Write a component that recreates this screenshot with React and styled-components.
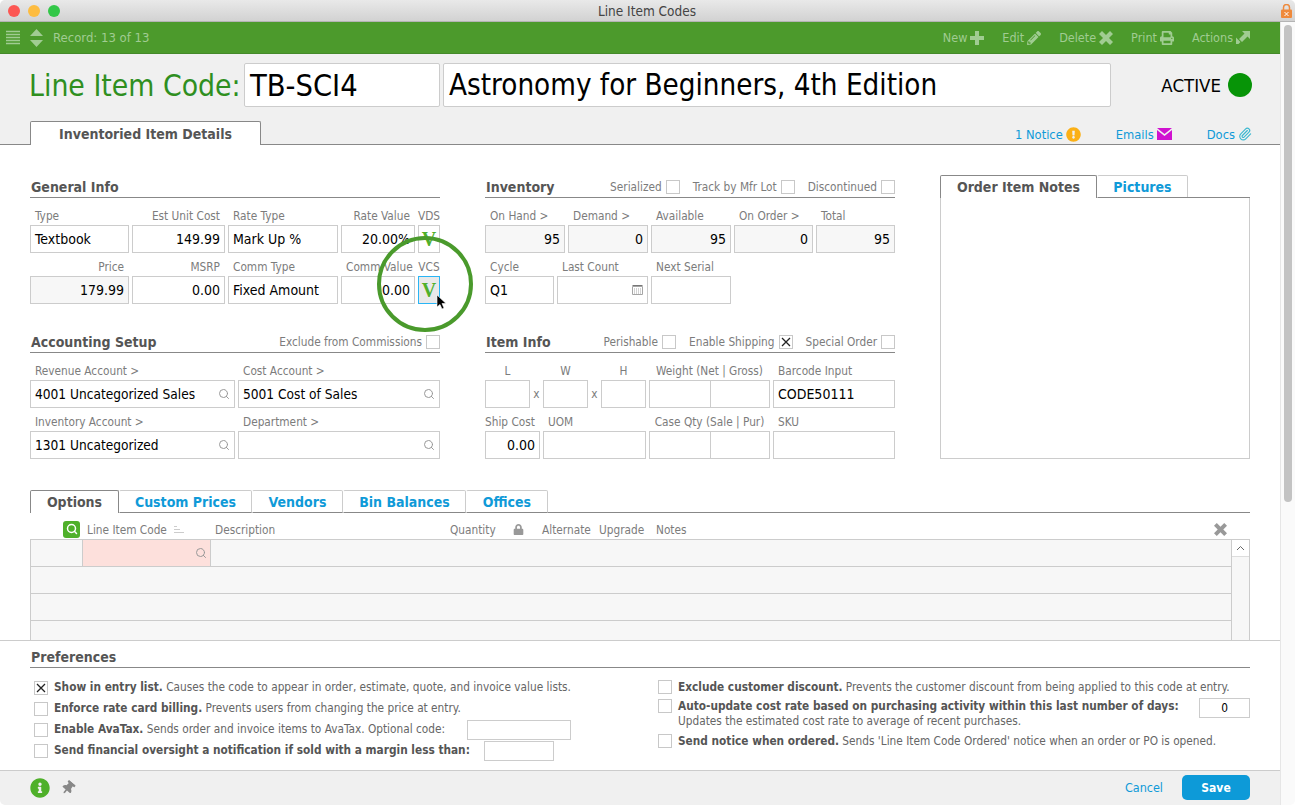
import styled, { createGlobalStyle } from "styled-components";
import { FaPencilAlt, FaPrint, FaExclamationCircle, FaInfoCircle, FaThumbtack, FaLock } from "react-icons/fa";
import { Search, Paperclip } from "lucide-react";

const GlobalStyle = createGlobalStyle`
  html, body { margin: 0; padding: 0; background: #fff; }
  * { box-sizing: border-box; }
  body { font-family: "DejaVu Sans Condensed", "Noto Sans", sans-serif; font-size: 11.75px; color: #7c7c7c; }
`;

const Window = styled.div`
  width: 1295px;
  height: 805px;
  display: flex;
  flex-direction: column;
  overflow: hidden;
  border-radius: 5px;
`;
const TitleBar = styled.div`
  height: 22px;
  flex: none;
  display: grid;
  grid-template-columns: 100px 1fr 106px;
  align-items: center;
  padding: 0 3px 0 8px;
  background: linear-gradient(#e9e9e9, #d2d2d2);
  border-bottom: 1px solid #b4b4b4;
  color: #444;
  font-size: 13.5px;
`;
const Lights = styled.div`
  display: flex;
  gap: 8px;
`;
const Light = styled.span`
  width: 12px;
  height: 12px;
  border-radius: 50%;
  background: ${(p) => p.$color};
`;
const WindowTitle = styled.div`
  text-align: center;
`;
const LockBadge = styled.svg`
  justify-self: end;
`;
const Body = styled.div`
  flex: 1;
  min-height: 0;
  display: flex;
`;
const Main = styled.div`
  width: 1280px;
  display: flex;
  flex-direction: column;
`;
const Track = styled.div`
  width: 15px;
  padding: 3px 3px 0;
  background: #fafafa;
  border-left: 1px solid #e6e6e6;
`;
const Thumb = styled.div`
  height: 477px;
  border-radius: 4px;
  background: #c3c3c3;
`;
const Toolbar = styled.div`
  height: 32px;
  flex: none;
  display: flex;
  align-items: center;
  padding: 0 30px 0 6px;
  background: #4c9a2c;
  border-bottom: 1px solid #44892a;
  color: #a0cc92;
  font-size: 12.5px;
`;
const Stepper = styled.svg`
  margin-left: 10px;
`;
const Record = styled.span`
  margin-left: 10px;
  font-size: 13px;
`;
const ToolActions = styled.div`
  margin-left: auto;
  display: flex;
  gap: 18px;
`;
const ToolAction = styled.span`
  display: flex;
  align-items: center;
  gap: 3px;
  svg { font-size: 14px; }
`;
const Header = styled.div`
  height: 91px;
  flex: none;
  display: flex;
  flex-direction: column;
  padding-top: 9px;
  background: #f0f0f0;
  border-bottom: 1px solid #888;
`;
const TitleRow = styled.div`
  height: 44px;
  display: flex;
  align-items: center;
  padding: 0 28px 0 29px;
`;
const BigLabel = styled.div`
  width: 215px;
  color: #2f8f1f;
  font-size: 29.800px;
  white-space: nowrap;
`;
const BigInput = styled.div`
  width: ${(p) => p.$w}px;
  height: 44px;
  margin-right: 3px;
  padding-left: 5px;
  display: flex;
  align-items: center;
  background: #fff;
  border: 1px solid #ccc;
  border-radius: 2px;
  color: #000;
  font-size: ${(p) => p.$size}px;
  white-space: nowrap;
`;
const Status = styled.div`
  margin-left: auto;
  display: flex;
  align-items: center;
  gap: 7px;
  color: #000;
  font-size: 18.500px;
`;
const Dot = styled.span`
  width: 24px;
  height: 24px;
  border-radius: 50%;
  background: #079407;
`;
const HeaderTabs = styled.div`
  margin-top: auto;
  height: 23px;
  display: flex;
  align-items: flex-end;
  justify-content: space-between;
  padding: 0 28px 0 30px;
`;
const Links = styled.div`
  display: flex;
  align-self: center;
  gap: 35px;
  padding-top: 3px;
  color: #0f9ad8;
`;
const HeadLink = styled.span`
  display: flex;
  align-items: center;
  gap: 3px;
  font-size: 12.800px;
`;
const Tab = styled.div`
  width: ${(p) => p.$w}px;
  height: 23px;
  display: flex;
  align-items: center;
  justify-content: center;
  background: #fff;
  border: 1px solid ${(p) => (p.$active ? "#888" : "#ccc")};
  border-left-color: ${(p) => (p.$active ? "#888" : "transparent")};
  border-bottom: ${(p) => (p.$active ? "none" : "1px solid #888")};
  border-radius: 2px 2px 0 0;
  color: ${(p) => (p.$active ? "#555" : "#0f9ad8")};
  font-size: 14px;
  font-weight: bold;
`;
const DetailTab = styled(Tab)`
  margin-bottom: -1px;
  height: 24px;
`;
const Content = styled.div`
  flex: 1;
  min-height: 0;
  overflow: hidden;
  padding: 30px 30px 0;
  background: #fff;
`;
const TopGrid = styled.div`
  display: grid;
  grid-template-columns: 410px 410px 310px;
  column-gap: 45px;
`;
const Column = styled.div`
  padding-top: 3px;
`;
const SectionHead = styled.div`
  height: 20px;
  margin-top: ${(p) => p.$top || 0}px;
  margin-bottom: 4px;
  padding-bottom: 2px;
  display: flex;
  align-items: center;
  justify-content: space-between;
  border-bottom: 1px solid #888;
`;
const SectionTitle = styled.span`
  padding-left: 1px;
  color: #555;
  font-size: 14px;
  font-weight: bold;
`;
const HeadChecks = styled.div`
  display: flex;
  gap: 13px;
`;
const HeadCheck = styled.span`
  display: flex;
  align-items: center;
  gap: 4px;
`;
const FieldRow = styled.div`
  display: grid;
  grid-template-columns: ${(p) => p.$cols};
  column-gap: 3px;
`;
const Field = styled.div`
  min-width: 0;
  position: relative;
`;
const Label = styled.div`
  height: 23px;
  padding: 5px ${(p) => (p.$flush ? "0" : "5px")} 0;
  line-height: 18px;
  text-align: ${(p) => p.$align || "left"};
  white-space: nowrap;
`;
const Input = styled.div`
  height: 28px;
  padding: 0 4px;
  display: flex;
  align-items: center;
  justify-content: ${(p) => (p.$right ? "flex-end" : "flex-start")};
  background: ${(p) => (p.$muted ? "#f7f7f7" : "#fff")};
  border: 1px solid #ccc;
  color: #000;
  font-size: 14px;
  white-space: nowrap;
  overflow: hidden;
  svg { margin-left: auto; flex: none; color: #999; }
`;
const LookupInput = styled(Input)`
  font-size: 13.600px;
`;
const SplitBox = styled.div`
  height: 28px;
  display: grid;
  grid-template-columns: 1fr 1fr;
  background: #fff;
  border: 1px solid #ccc;
  span + span { border-left: 1px solid #ccc; }
`;
const Times = styled.div`
  padding-top: 23px;
  line-height: 28px;
  text-align: center;
`;
const VButton = styled.div`
  position: relative;
  height: 28px;
  display: flex;
  align-items: center;
  justify-content: center;
  background: ${(p) => (p.$focus ? "#e9e9e9" : "#fff")};
  border: 1px solid ${(p) => (p.$focus ? "#2ab5f5" : "#ccc")};
  color: #4fb02a;
  font-family: "Liberation Serif", serif;
  font-size: 20px;
  font-weight: bold;
`;
const Ring = styled.div`
  position: absolute;
  left: -42px;
  top: -41px;
  width: 96px;
  height: 96px;
  border: 4px solid #4a9a2c;
  border-radius: 50%;
`;
const Pointer = styled.svg`
  position: absolute;
  left: 17px;
  top: 18px;
`;
const Check = styled.span`
  width: 14px;
  height: 14px;
  flex: none;
  display: inline-flex;
  align-items: center;
  justify-content: center;
  background: #fff;
  border: 1px solid #c8c8c8;
`;
const NotesTabs = styled.div`
  display: flex;
`;
const NotesBox = styled.div`
  height: 261px;
  border: 1px solid #ccc;
  border-top: none;
  position: relative;
  &::before {
    content: "";
    position: absolute;
    left: 157px;
    right: -1px;
    top: -1px;
    border-top: 1px solid #888;
  }
`;
const TabStrip = styled.div`
  margin-top: 31px;
  height: 23px;
  display: flex;
  border-bottom: 1px solid #888;
`;
const GridHead = styled.div`
  height: 26px;
  display: flex;
  align-items: center;
  padding-top: 7px;
`;
const HeadCell = styled.span`
  width: ${(p) => p.$w}px;
  flex: none;
  display: flex;
  align-items: center;
  white-space: nowrap;
`;
const SearchToggle = styled.span`
  width: 17px;
  height: 17px;
  margin: -1px 7px 0 33px;
  display: flex;
  align-items: center;
  justify-content: center;
  background: #4fb02a;
  border-radius: 3px;
  color: #fff;
`;
const Table = styled.div`
  height: 110px;
  display: grid;
  grid-template-columns: 1fr 18px;
  border: 1px solid #ccc;
  border-bottom: none;
  background: #f7f7f7;
`;
const TableRow = styled.div`
  height: 27px;
  display: grid;
  grid-template-columns: 51px 128px 1fr;
  border-bottom: 1px solid #ccc;
`;
const Cell = styled.div`
  display: flex;
  align-items: center;
  justify-content: flex-end;
  padding-right: 3px;
  background: ${(p) => (p.$pink ? "#fde0dc" : "transparent")};
  border-left: ${(p) => (p.$line ? "1px solid #ccc" : "none")};
  color: #999;
`;
const TableScroll = styled.div`
  border-left: 1px solid #ccc;
`;
const ScrollUp = styled.div`
  height: 17px;
  display: flex;
  align-items: center;
  justify-content: center;
  background: #fff;
  border-bottom: 1px solid #ddd;
`;
const Preferences = styled.div`
  height: 130px;
  flex: none;
  padding: 0 30px;
  background: #fff;
  border-top: 1px solid #ccc;
`;
const PrefHead = styled.div`
  height: 27px;
  display: flex;
  align-items: flex-end;
  padding: 0 0 2px 1px;
  border-bottom: 1px solid #888;
  color: #555;
  font-size: 14px;
  font-weight: bold;
`;
const PrefGrid = styled.div`
  margin-top: 9px;
  padding-left: 4px;
  display: grid;
  grid-template-columns: 624px 1fr;
`;
const PrefRow = styled.div`
  height: ${(p) => p.$h || 21}px;
  display: flex;
  align-items: ${(p) => (p.$top ? "flex-start" : "center")};
  padding-top: ${(p) => (p.$top ? 1 : 0)}px;
  gap: 6px;
  white-space: nowrap;
  line-height: 15px;
  color: #666;
  b { color: #555; }
  ${(p) => p.$top && "> span { margin-top: 1px; }"}
`;
const PrefInput = styled.div`
  width: ${(p) => p.$w}px;
  height: 20px;
  flex: none;
  margin-left: ${(p) => (p.$end ? "auto" : `${p.$left}px`)};
  display: flex;
  align-items: center;
  justify-content: center;
  background: #fff;
  border: 1px solid #ccc;
  color: #000;
`;
const Footer = styled.div`
  height: 35px;
  flex: none;
  display: flex;
  align-items: center;
  padding: 0 30px 1px;
  background: #f0f0f0;
  border-top: 1px solid #ccc;
`;
const FootIcons = styled.div`
  display: flex;
  align-items: center;
  gap: 11px;
`;
const Pin = styled(FaThumbtack)`
  transform: rotate(40deg);
`;
const Cancel = styled.span`
  margin-left: auto;
  color: #0f9ad8;
  font-size: 12.500px;
`;
const Save = styled.button`
  width: 68px;
  height: 25px;
  margin-left: 19px;
  background: #0d9ad8;
  border: none;
  border-radius: 5px;
  color: #fff;
  font: bold 12px "DejaVu Sans Condensed", "Noto Sans", sans-serif;
`;

const Tick = () => (
  <svg width="10" height="10" viewBox="0 0 10 10">
    <path d="M1 1l8 8M9 1l-8 8" stroke="#222" strokeWidth="1.3" />
  </svg>
);

const Box = ({ checked }) => <Check>{checked && <Tick />}</Check>;

const MenuIcon = () => (
  <svg width="14" height="15" viewBox="0 0 14 15">
    <path d="M0 1.500h14M0 4.500h14M0 7.500h14M0 10.500h14M0 13.500h14" stroke="#a0cc92" strokeWidth="1.400" />
  </svg>
);

const PlusIcon = () => (
  <svg width="14" height="14" viewBox="0 0 14 14">
    <path d="M5 0h4v5h5v4H9v5H5V9H0V5h5z" fill="#a0cc92" />
  </svg>
);

const CrossIcon = ({ color = "#a0cc92", size = 14 }) => (
  <svg width={size} height={size} viewBox="0 0 14 14">
    <path d="M3 0l4 4 4-4 3 3-4 4 4 4-3 3-4-4-4 4-3-3 4-4-4-4z" fill={color} />
  </svg>
);

const ShareIcon = () => (
  <svg width="14" height="13" viewBox="0 0 14 13" fill="#a0cc92">
    <path d="M6 0h8v8l-2.500-2.500L6 11 3 8l5.500-5.500zM0 6.500L4.500 11l-2 2H0z" />
  </svg>
);

const MailIcon = () => (
  <svg width="15" height="12" viewBox="0 0 15 12">
    <path d="M0 0l7.500 6L15 0zM0 2v10h15V2L7.500 8z" fill="#d012d0" />
  </svg>
);

const SmallSort = () => (
  <svg width="10" height="8" viewBox="0 0 10 8">
    <path d="M0 .5h3M0 3.500h6M0 6.500h10" stroke="#ccc" strokeWidth="1.200" />
  </svg>
);

const Calendar = () => (
  <svg width="11" height="10" viewBox="0 0 11 10" fill="none" stroke="#a5a5a5">
    <path d="M.5 1.500h10v8H.5z" />
    <path d="M.5.5h10" stroke="#777" />
    <path d="M2 4h7M2 6h7M2 8h7" strokeDasharray="1 1" />
  </svg>
);

const Glass = () => <Search size={12} strokeWidth={2} />;

export default function App() {
  return (
    <Window>
      <GlobalStyle />
      <TitleBar>
        <Lights>
          <Light $color="#fc5753" />
          <Light $color="#fdbc40" />
          <Light $color="#33c748" />
        </Lights>
        <WindowTitle>Line Item Codes</WindowTitle>
        <LockBadge width="11" height="14" viewBox="0 0 11 14">
          <path d="M2.500 6V3.500a3 3 0 0 1 6 0V6" fill="none" stroke="#ef8a3c" strokeWidth="1.500" />
          <rect y="5.500" width="11" height="8.500" rx="1" fill="#ef8a3c" />
          <path d="M3.500 8l4 4M7.500 8l-4 4" stroke="#fff" />
        </LockBadge>
      </TitleBar>
      <Body>
        <Main>
          <Toolbar>
            <MenuIcon />
            <Stepper width="13" height="18" viewBox="0 0 13 18">
              <path d="M6.500 0L13 7H0zM0 11h13l-6.500 7z" fill="#a0cc92" />
            </Stepper>
            <Record>Record: 13 of 13</Record>
            <ToolActions>
              <ToolAction>New <PlusIcon /></ToolAction>
              <ToolAction>Edit <FaPencilAlt /></ToolAction>
              <ToolAction>Delete <CrossIcon /></ToolAction>
              <ToolAction>Print <FaPrint /></ToolAction>
              <ToolAction>Actions <ShareIcon /></ToolAction>
            </ToolActions>
          </Toolbar>
          <Header>
            <TitleRow>
              <BigLabel>Line Item Code:</BigLabel>
              <BigInput $w={196} $size={30.5}>TB-SCI4</BigInput>
              <BigInput $w={668} $size={29.3}>Astronomy for Beginners, 4th Edition</BigInput>
              <Status>ACTIVE <Dot /></Status>
            </TitleRow>
            <HeaderTabs>
              <DetailTab $active $w={231}>Inventoried Item Details</DetailTab>
              <Links>
                <HeadLink>1 Notice <FaExclamationCircle color="#fbb016" size={15} /></HeadLink>
                <HeadLink>Emails <MailIcon /></HeadLink>
                <HeadLink>Docs <Paperclip color="#3cb8d0" size={14} /></HeadLink>
              </Links>
            </HeaderTabs>
          </Header>
          <Content>
            <TopGrid>
              <Column>
                <SectionHead><SectionTitle>General Info</SectionTitle></SectionHead>
                <FieldRow $cols="99px 93px 110px 74px 22px">
                  <Field><Label>Type</Label><Input>Textbook</Input></Field>
                  <Field><Label $align="right">Est Unit Cost</Label><Input $right>149.99</Input></Field>
                  <Field><Label>Rate Type</Label><Input>Mark Up %</Input></Field>
                  <Field><Label $align="right">Rate Value</Label><Input $right>20.00%</Input></Field>
                  <Field><Label $align="center" $flush>VDS</Label><VButton>V</VButton></Field>
                </FieldRow>
                <FieldRow $cols="99px 93px 110px 74px 22px">
                  <Field><Label $align="right">Price</Label><Input $right $muted>179.99</Input></Field>
                  <Field><Label $align="right">MSRP</Label><Input $right>0.00</Input></Field>
                  <Field><Label>Comm Type</Label><Input>Fixed Amount</Input></Field>
                  <Field><Label $align="right">Comm Value</Label><Input $right>0.00</Input></Field>
                  <Field>
                    <Label $align="center" $flush>VCS</Label>
                    <VButton $focus>
                      V
                      <Ring />
                      <Pointer width="10" height="15" viewBox="0 0 10 15">
                        <path d="M1 0v12l3-2.500 2 4.500 2-1-2-4.500h4z" fill="#000" stroke="#fff" strokeWidth=".6" />
                      </Pointer>
                    </VButton>
                  </Field>
                </FieldRow>
                <SectionHead $top={29}>
                  <SectionTitle>Accounting Setup</SectionTitle>
                  <HeadCheck>Exclude from Commissions <Box /></HeadCheck>
                </SectionHead>
                <FieldRow $cols="205px 202px">
                  <Field><Label>Revenue Account &gt;</Label><LookupInput>4001 Uncategorized Sales <Glass /></LookupInput></Field>
                  <Field><Label>Cost Account &gt;</Label><LookupInput>5001 Cost of Sales <Glass /></LookupInput></Field>
                </FieldRow>
                <FieldRow $cols="205px 202px">
                  <Field><Label>Inventory Account &gt;</Label><LookupInput>1301 Uncategorized <Glass /></LookupInput></Field>
                  <Field><Label>Department &gt;</Label><LookupInput><Glass /></LookupInput></Field>
                </FieldRow>
              </Column>
              <Column>
                <SectionHead>
                  <SectionTitle>Inventory</SectionTitle>
                  <HeadChecks>
                    <HeadCheck>Serialized <Box /></HeadCheck>
                    <HeadCheck>Track by Mfr Lot <Box /></HeadCheck>
                    <HeadCheck>Discontinued <Box /></HeadCheck>
                  </HeadChecks>
                </SectionHead>
                <FieldRow $cols="80px 80px 80px 79px 79px">
                  <Field><Label>On Hand &gt;</Label><Input $right $muted>95</Input></Field>
                  <Field><Label>Demand &gt;</Label><Input $right $muted>0</Input></Field>
                  <Field><Label>Available</Label><Input $right $muted>95</Input></Field>
                  <Field><Label>On Order &gt;</Label><Input $right $muted>0</Input></Field>
                  <Field><Label>Total</Label><Input $right $muted>95</Input></Field>
                </FieldRow>
                <FieldRow $cols="69px 91px 80px">
                  <Field><Label>Cycle</Label><Input>Q1</Input></Field>
                  <Field><Label>Last Count</Label><Input><Calendar /></Input></Field>
                  <Field><Label>Next Serial</Label><Input /></Field>
                </FieldRow>
                <SectionHead $top={29}>
                  <SectionTitle>Item Info</SectionTitle>
                  <HeadChecks>
                    <HeadCheck>Perishable <Box /></HeadCheck>
                    <HeadCheck>Enable Shipping <Box checked /></HeadCheck>
                    <HeadCheck>Special Order <Box /></HeadCheck>
                  </HeadChecks>
                </SectionHead>
                <FieldRow $cols="45px 7px 45px 7px 45px 121px 122px">
                  <Field><Label $align="center">L</Label><Input /></Field>
                  <Times>x</Times>
                  <Field><Label $align="center">W</Label><Input /></Field>
                  <Times>x</Times>
                  <Field><Label $align="center">H</Label><Input /></Field>
                  <Field><Label $align="center" $flush>Weight (Net | Gross)</Label><SplitBox><span /><span /></SplitBox></Field>
                  <Field><Label>Barcode Input</Label><Input>CODE50111</Input></Field>
                </FieldRow>
                <FieldRow $cols="55px 103px 121px 122px">
                  <Field><Label $flush>Ship Cost</Label><Input $right>0.00</Input></Field>
                  <Field><Label>UOM</Label><Input /></Field>
                  <Field><Label $align="center" $flush>Case Qty (Sale | Pur)</Label><SplitBox><span /><span /></SplitBox></Field>
                  <Field><Label>SKU</Label><Input /></Field>
                </FieldRow>
              </Column>
              <div>
                <NotesTabs>
                  <Tab $active $w={157}>Order Item Notes</Tab>
                  <Tab $w={91}>Pictures</Tab>
                </NotesTabs>
                <NotesBox />
              </div>
            </TopGrid>
            <TabStrip>
              <Tab $active $w={89}>Options</Tab>
              <Tab $w={133}>Custom Prices</Tab>
              <Tab $w={91}>Vendors</Tab>
              <Tab $w={123}>Bin Balances</Tab>
              <Tab $w={82}>Offices</Tab>
            </TabStrip>
            <GridHead>
              <SearchToggle><Search size={12} strokeWidth={3} /></SearchToggle>
              <HeadCell $w={128}>Line Item Code&nbsp;&nbsp;<SmallSort /></HeadCell>
              <HeadCell $w={235}>Description</HeadCell>
              <HeadCell $w={63}>Quantity</HeadCell>
              <HeadCell $w={29}><FaLock size={11} color="#999" /></HeadCell>
              <HeadCell $w={57}>Alternate</HeadCell>
              <HeadCell $w={57}>Upgrade</HeadCell>
              <HeadCell $w={558}>Notes</HeadCell>
              <CrossIcon color="#999" size={13} />
            </GridHead>
            <Table>
              <div>
                <TableRow>
                  <Cell />
                  <Cell $pink $line><Glass /></Cell>
                  <Cell $line />
                </TableRow>
                <TableRow />
                <TableRow />
                <TableRow />
              </div>
              <TableScroll>
                <ScrollUp>
                  <svg width="9" height="6" viewBox="0 0 9 6"><path d="M1 5l3.500-3.500L8 5" fill="none" stroke="#666" /></svg>
                </ScrollUp>
              </TableScroll>
            </Table>
          </Content>
          <Preferences>
            <PrefHead>Preferences</PrefHead>
            <PrefGrid>
              <div>
                <PrefRow><Box checked /><span><b>Show in entry list.</b> Causes the code to appear in order, estimate, quote, and invoice value lists.</span></PrefRow>
                <PrefRow><Box /><span><b>Enforce rate card billing.</b> Prevents users from changing the price at entry.</span></PrefRow>
                <PrefRow><Box /><span><b>Enable AvaTax.</b> Sends order and invoice items to AvaTax. Optional code:</span><PrefInput $w={104} $left={16} /></PrefRow>
                <PrefRow><Box /><span><b>Send financial oversight a notification if sold with a margin less than:</b></span><PrefInput $w={70} $left={8} /></PrefRow>
              </div>
              <div>
                <PrefRow $h={20}><Box /><span><b>Exclude customer discount.</b> Prevents the customer discount from being applied to this code at entry.</span></PrefRow>
                <PrefRow $h={34} $top>
                  <Box />
                  <span><b>Auto-update cost rate based on purchasing activity within this last number of days:</b><br />Updates the estimated cost rate to average of recent purchases.</span>
                  <PrefInput $w={51} $end>0</PrefInput>
                </PrefRow>
                <PrefRow $h={20}><Box /><span><b>Send notice when ordered.</b> Sends 'Line Item Code Ordered' notice when an order or PO is opened.</span></PrefRow>
              </div>
            </PrefGrid>
          </Preferences>
          <Footer>
            <FootIcons>
              <FaInfoCircle size={20} color="#4fb02a" />
              <Pin size={14} color="#888" />
            </FootIcons>
            <Cancel>Cancel</Cancel>
            <Save>Save</Save>
          </Footer>
        </Main>
        <Track><Thumb /></Track>
      </Body>
    </Window>
  );
}
